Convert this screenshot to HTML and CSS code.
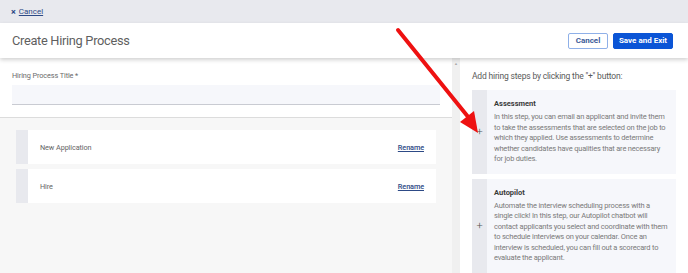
FILE: index.html
```html
<!DOCTYPE html>
<html>
<head>
<meta charset="utf-8">
<link rel="stylesheet" href="styles.css">
</head>
<body>
<div class="page">
  <div class="topbar">
    <span class="x">×</span><a class="cancel-link" href="#">Cancel</a>
  </div>
  <div class="header">
    <h1 class="title">Create Hiring Process</h1>
    <div class="actions">
      <button class="btn btn-outline">Cancel</button>
      <button class="btn btn-primary">Save and Exit</button>
    </div>
  </div>
  <div class="main">
    <div class="left">
      <div class="form">
        <label class="label">Hiring Process Title *</label>
        <div class="input"></div>
      </div>
      <div class="steps">
        <div class="step">
          <div class="strip"></div>
          <div class="step-body"><span class="step-name">New Application</span><a class="rename" href="#">Rename</a></div>
        </div>
        <div class="step">
          <div class="strip"></div>
          <div class="step-body"><span class="step-name">Hire</span><a class="rename" href="#">Rename</a></div>
        </div>
      </div>
    </div>
    <div class="scrollbar"><span class="up">▲</span></div>
    <div class="right">
      <p class="hint">Add hiring steps by clicking the "+" button:</p>
      <div class="card">
        <div class="card-strip">+</div>
        <div class="card-body">
          <div class="card-title">Assessment</div>
          <p class="card-text">In this step, you can email an applicant and invite them to take the assessments that are selected on the job to which they applied. Use assessments to determine whether candidates have qualities that are necessary for job duties.</p>
        </div>
      </div>
      <div class="card">
        <div class="card-strip">+</div>
        <div class="card-body">
          <div class="card-title">Autopilot</div>
          <p class="card-text">Automate the interview scheduling process with a single click! In this step, our Autopilot chatbot will contact applicants you select and coordinate with them to schedule interviews on your calendar. Once an interview is scheduled, you can fill out a scorecard to evaluate the applicant.</p>
        </div>
      </div>
    </div>
  </div>
  <svg class="arrow" width="688" height="273" viewBox="0 0 688 273">
    <line x1="398" y1="30" x2="469" y2="118" stroke="#ee1111" stroke-width="4" stroke-linecap="round"/>
    <polygon points="478,133 460,122 474,111" fill="#ee1111"/>
  </svg>
</div>
</body>
</html>
```
FILE: styles.css
```css
* { box-sizing: border-box; }
html, body { margin: 0; padding: 0; }
body {
  width: 688px;
  height: 273px;
  overflow: hidden;
  font-family: Roboto, "Liberation Sans", sans-serif;
  background: #fff;
}
.page {
  position: relative;
  width: 688px;
  height: 273px;
  display: flex;
  flex-direction: column;
}
.topbar {
  height: 23px;
  background: #e8e9ee;
  display: flex;
  align-items: center;
  padding-left: 11px;
  font-size: 8px;
}
.x { color: #2d4a86; font-size: 9px; margin-right: 3px; font-weight: bold; }
.cancel-link { color: #2d4a86; text-decoration: underline; }
.header {
  height: 35px;
  background: #fff;
  display: flex;
  align-items: center;
  justify-content: space-between;
  padding: 0 15px 0 12px;
  box-shadow: 0 2px 4px rgba(0,0,0,0.18);
  position: relative;
  z-index: 2;
}
.title {
  margin: 0;
  font-size: 12.8px;
  letter-spacing: -0.3px;
  font-weight: 400;
  color: #5f5f5f;
}
.actions { display: flex; gap: 5px; }
.btn {
  height: 16px;
  font-family: Roboto, "Liberation Sans", sans-serif;
  font-size: 8px;
  font-weight: 700;
  border-radius: 2px;
  padding: 0;
}
.btn-outline {
  width: 40px;
  background: #fff;
  color: #3d5c99;
  border: 1px solid #8fb0e8;
}
.btn-primary {
  width: 60px;
  background: #0b55d6;
  color: #fff;
  border: 1px solid #0b55d6;
}
.main {
  flex: 1;
  display: flex;
  min-height: 0;
}
.left {
  width: 452px;
  background: #f7f7f7;
  display: flex;
  flex-direction: column;
}
.form {
  background: #fff;
  padding: 13px 12px 12px 12px;
  height: 60px;
  border-bottom: 1px solid #dcdcdc;
}
.label {
  display: block;
  font-size: 7.3px;
  letter-spacing: -0.1px;
  color: #6a6a6a;
  margin-bottom: 5px;
}
.input {
  width: 428px;
  height: 20px;
  background: #f6f7fb;
  border-bottom: 1px solid #c9cbd2;
}
.steps {
  padding: 12px 16px 0 16px;
  display: flex;
  flex-direction: column;
  gap: 5px;
}
.step {
  display: flex;
  height: 34px;
  width: 420px;
}
.strip { width: 12px; background: #e8e9ee; }
.step-body {
  flex: 1;
  background: #fff;
  display: flex;
  align-items: center;
  justify-content: space-between;
  padding: 0 12px 0 12px;
  font-size: 7.3px;
  letter-spacing: -0.1px;
}
.step-name { color: #666; }
.rename { color: #2d4a86; text-decoration: underline; font-weight: 500; }
.scrollbar {
  width: 8px;
  background: #f0f0f0;
  display: flex;
  justify-content: center;
}
.up { font-size: 4px; color: #aaa; margin-top: 3px; }
.right {
  flex: 1;
  background: #fff;
  padding: 13px 12px 0 12px;
}
.hint {
  margin: 0 0 9px 0;
  font-size: 8.5px;
  letter-spacing: -0.18px;
  color: #5a5a5a;
}
.card {
  display: flex;
  background: #f6f7fb;
  margin-bottom: 5px;
  width: 204px;
}
.card-strip {
  width: 15px;
  background: #e8e9ee;
  display: flex;
  align-items: center;
  justify-content: center;
  font-size: 11px;
  font-weight: 300;
  color: #555;
}
.card-body {
  flex: 1;
  padding: 9px 6px 9px 7px;
}
.card-title {
  font-size: 7.5px;
  font-weight: 700;
  color: #3a3a3a;
  margin-bottom: 4px;
}
.card-text {
  margin: 0;
  font-size: 7.5px;
  letter-spacing: -0.2px;
  line-height: 10.5px;
  color: #7a7a7a;
}
.arrow {
  position: absolute;
  left: 0;
  top: 0;
  pointer-events: none;
  z-index: 5;
}
```
